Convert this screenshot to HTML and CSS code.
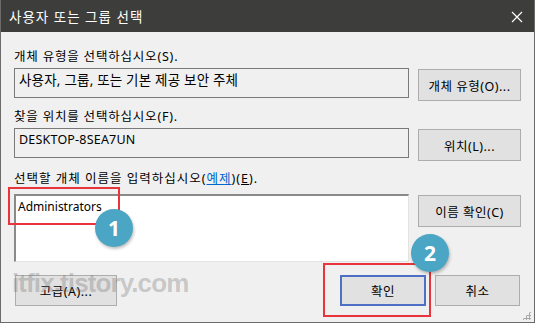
FILE: index.html
```html
<!DOCTYPE html>
<html lang="ko">

<head>
  <meta charset="UTF-8">
  <title>사용자 또는 그룹 선택</title>
  <link rel="stylesheet" href="styles.css">
</head>

<body>
  <div class="window">
    <div class="titlebar">
      <span class="title">사용자 또는 그룹 선택</span>
      <svg class="close" width="12" height="12" viewBox="0 0 12 12">
        <path d="M1 1 L11 11 M11 1 L1 11" stroke="#fff" stroke-width="1.2" fill="none" />
      </svg>
    </div>

    <div class="content">
      <!-- 개체 유형 -->
      <div class="label">개체 유형을 선택하십시오(S).</div>
      <div class="row">
        <div class="field">사용자, 그룹, 또는 기본 제공 보안 주체</div>
        <button class="button">개체 유형(O)...</button>
      </div>

      <!-- 위치 -->
      <div class="label second">찾을 위치를 선택하십시오(F).</div>
      <div class="row">
        <div class="field small">DESKTOP-8SEA7UN</div>
        <button class="button">위치(L)...</button>
      </div>

      <!-- 개체 이름 -->
      <div class="label third">선택할 개체 이름을 입력하십시오(<a class="link">예제</a>)(<u>E</u>).</div>
      <div class="row">
        <div class="names">Administrators</div>
        <button class="button">이름 확인(C)</button>
      </div>

      <div class="footer">
        <button class="button wide">고급(A)...</button>
        <div class="spacer"></div>
        <button class="button default">확인</button>
        <button class="button narrow">취소</button>
      </div>
    </div>

    <div class="grip"></div>

    <div class="watermark">itfix.tistory.com</div>
    <div class="mark mark-one"></div>
    <div class="badge badge-one">1</div>
    <div class="mark mark-two"></div>
    <div class="badge badge-two">2</div>
  </div>
</body>

</html>
```

FILE: styles.css
```css
body {
  margin: 0;
  padding: 0;
  background-color: #f0f0f0;
  font-family: "Noto Sans", "Noto Sans CJK KR", sans-serif;
  color: #000;
}

.window {
  position: relative;
  width: 535px;
  height: 323px;
  box-sizing: border-box;
  border: 1px solid #6b6b6b;
  border-top: none;
  background-color: #f0f0f0;
  overflow: hidden;
}

.titlebar {
  height: 32px;
  background-color: #3d3d3b;
  display: flex;
  align-items: center;
  justify-content: space-between;
  padding: 0 12px 0 9px;
  margin: 0 -1px;
}

.title {
  color: #fff;
  font-size: 13.5px;
  letter-spacing: 1px;
}

.close {
  margin-top: 1px;
}

.content {
  padding: 17px 0 0 13px;
}

.label {
  font-size: 12.5px;
  letter-spacing: 0.8px;
  line-height: 16px;
  height: 16px;
  margin-bottom: 3px;
}

.label.second {
  margin-top: 8px;
}

.label.third {
  margin-top: 10px;
  margin-bottom: 7px;
  letter-spacing: 1px;
}

.link {
  color: #0066cc;
  text-decoration: underline;
}

.row {
  display: flex;
  align-items: flex-start;
  gap: 9px;
}

.field {
  width: 395px;
  height: 30px;
  box-sizing: border-box;
  border: 1px solid #7a7a7a;
  padding: 0 0 0 4px;
  font-size: 13.5px;
  letter-spacing: 0.2px;
  line-height: 22px;
}

.field.small {
  font-size: 12.5px;
  letter-spacing: 0.2px;
}

.names {
  width: 395px;
  height: 68px;
  box-sizing: border-box;
  background-color: #fff;
  border-top: 2px solid #8a8a8a;
  border-left: 2px solid #8a8a8a;
  border-right: 1px solid #e3e3e3;
  border-bottom: 1px solid #e3e3e3;
  padding: 3px 0 0 2px;
  font-size: 12px;
  line-height: 16px;
}

.button {
  margin-top: 1px;
  width: 103px;
  height: 32px;
  background-color: #e1e1e1;
  border: 1px solid #adadad;
  font-family: "Noto Sans", "Noto Sans CJK KR", sans-serif;
  font-size: 12.5px;
  letter-spacing: 0.5px;
  color: #000;
  padding: 0;
}

.footer {
  display: flex;
  align-items: center;
  gap: 9px;
  margin-top: 13px;
  padding-left: 1px;
}

.footer .button {
  margin-top: 0;
  height: 31px;
}

.button.wide {
  width: 102px;
}

.spacer {
  flex: 1;
}

.button.default {
  width: 86px;
  border: 2px solid #4f6fc6;
}

.button.narrow {
  width: 85px;
  margin-right: 14px;
}

.grip {
  position: absolute;
  right: 3px;
  bottom: 2px;
  width: 9px;
  height: 9px;
  background-image: radial-gradient(circle, #a8a8a8 1px, transparent 1.2px);
  background-size: 3px 3px;
  clip-path: polygon(100% 0, 100% 100%, 0 100%);
}

.watermark {
  position: absolute;
  left: 11px;
  top: 268px;
  font-family: "Liberation Sans", sans-serif;
  font-weight: bold;
  font-size: 26px;
  letter-spacing: -0.9px;
  color: rgba(100, 100, 100, 0.3);
  pointer-events: none;
}

.mark {
  position: absolute;
  border: 2px solid #e8343a;
  box-sizing: border-box;
}

.mark-one {
  left: 7px;
  top: 187px;
  width: 112px;
  height: 38px;
}

.mark-two {
  left: 322px;
  top: 263px;
  width: 108px;
  height: 54px;
}

.badge {
  position: absolute;
  width: 38px;
  height: 38px;
  border-radius: 50%;
  background-color: #4aa6c4;
  color: #fff;
  font-family: "Noto Sans", sans-serif;
  font-weight: bold;
  font-size: 21px;
  display: flex;
  align-items: center;
  justify-content: center;
  box-shadow: 1px 2px 3px rgba(0, 0, 0, 0.25);
}

.badge-one {
  left: 94px;
  top: 209px;
}

.badge-two {
  left: 410px;
  top: 234px;
}
```
